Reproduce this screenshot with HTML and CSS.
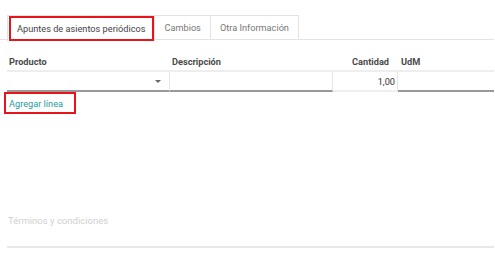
FILE: index.html
```html
<!DOCTYPE html>
<html lang="es">
<head>
    <meta charset="UTF-8">
    <title>Asientos periódicos</title>
    <link rel="stylesheet" href="styles.css">
</head>
<body>
    <div class="sheet">
        <ul class="tabs">
            <li class="tab active"><span class="mark">Apuntes de asientos periódicos</span></li>
            <li class="tab">Cambios</li>
            <li class="tab">Otra Información</li>
        </ul>

        <div class="lines">
            <div class="cell head">Producto</div>
            <div class="cell head">Descripción</div>
            <div class="cell head num">Cantidad</div>
            <div class="cell head uom">UdM</div>

            <div class="cell field product"><span class="caret"></span></div>
            <div class="cell field desc"></div>
            <div class="cell qty">1,00</div>
            <div class="cell field"></div>
        </div>

        <div class="add-row">
            <a class="add-link" href="#">Agregar línea</a>
        </div>

        <div class="terms">Términos y condiciones</div>
    </div>
</body>
</html>
```

FILE: styles.css
```css
body {
    margin: 0;
    padding: 0;
    background: #fff;
    font-family: 'Roboto', 'Liberation Sans', sans-serif;
    font-size: 9.2px;
    color: #4c4c4c;
}

.sheet {
    padding: 15px 1px 0 7px;
}

.tabs {
    list-style: none;
    margin: 0 0 0 -7px;
    padding: 0 0 0 7px;
    display: flex;
    border-bottom: 1px solid #e3e3e3;
    height: 24px;
}

.tab {
    height: 24px;
    box-sizing: border-box;
    padding: 0 9px;
    display: flex;
    align-items: center;
    color: #777;
    border: 1px solid #e3e3e3;
    border-bottom: none;
    border-left: none;
}

.tab.active {
    padding: 0;
    border-left: 1px solid #e3e3e3;
    background: #fff;
    height: 26px;
}

.mark {
    display: flex;
    align-items: center;
    height: 25px;
    box-sizing: border-box;
    margin-left: 1px;
    padding: 0 7px 0 6px;
    border: 2px solid #e8141b;
    color: #444;
}

.lines {
    display: grid;
    grid-template-columns: 163px 163px 65px 1fr;
    margin-top: 12px;
}

.cell {
    height: 20px;
    box-sizing: border-box;
    display: flex;
    align-items: center;
    padding: 0 2px;
}

.head {
    font-weight: 700;
    color: #4a4a4a;
    border-bottom: 2px solid #eeeeee;
    padding-top: 1px;
}

.head.num {
    justify-content: flex-end;
    padding-right: 9px;
}

.head.uom {
    padding-left: 3px;
}

.field {
    border-bottom: 2px solid #999;
}

.product {
    justify-content: flex-end;
    border-right: 1px solid #e6e6e6;
    padding-right: 8px;
}

.desc {
    border-right: 1px solid #e6e6e6;
}

.caret {
    width: 0;
    height: 0;
    border-left: 3px solid transparent;
    border-right: 3px solid transparent;
    border-top: 3px solid #666;
}

.qty {
    justify-content: flex-end;
    padding-right: 2px;
    color: #333;
    border-right: 1px solid #e6e6e6;
    border-bottom: 2px solid #efefef;
}

.add-row {
    margin-left: -3px;
}

.add-link {
    display: inline-flex;
    align-items: center;
    height: 22px;
    box-sizing: border-box;
    padding: 0 11px 0 3px;
    border: 2px solid #e8141b;
    color: #1f9c9c;
    text-decoration: none;
}

.terms {
    margin-top: 98px;
    height: 36px;
    padding: 0 1px 18px;
    box-sizing: border-box;
    display: flex;
    align-items: center;
    font-size: 9.5px;
    color: #d0d0d0;
    border-bottom: 2px solid #e8e8e8;
}
```
